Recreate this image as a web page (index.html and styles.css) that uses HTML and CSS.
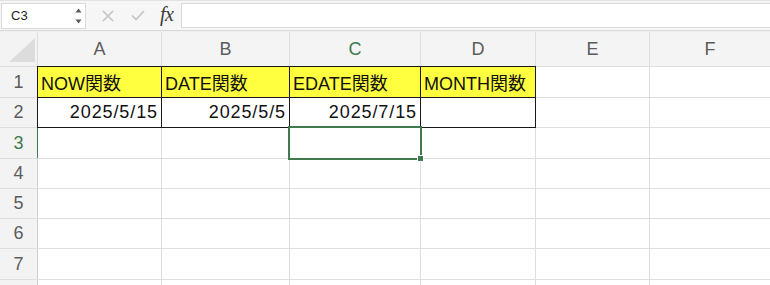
FILE: index.html
```html
<!DOCTYPE html>
<html lang="ja">
<head>
<meta charset="utf-8">
<title>Sheet</title>
<link rel="stylesheet" href="styles.css">
</head>
<body>
<div class="app">
  <div class="toolbar">
    <div class="namebox">
      <span class="ref">C3</span>
      <span class="spin">
        <svg width="7" height="17" viewBox="0 0 7 17"><polygon points="3.5,0.5 6.5,4.5 0.5,4.5" fill="#5a5a5a"/><polygon points="0.5,11.5 6.5,11.5 3.5,15.5" fill="#5a5a5a"/></svg>
      </span>
    </div>
    <span class="tb-icon cancel">
      <svg width="12" height="12" viewBox="0 0 12 12"><path d="M1 1 L11 11 M11 1 L1 11" stroke="#c4c4c4" stroke-width="1.6" fill="none"/></svg>
    </span>
    <span class="tb-icon ok">
      <svg width="14" height="11" viewBox="0 0 14 11"><path d="M1 5.5 L5 9.5 L13 1" stroke="#c4c4c4" stroke-width="1.6" fill="none"/></svg>
    </span>
    <span class="fx">fx</span>
    <div class="formula"></div>
  </div>
  <div class="sheet">
    <div class="corner"><svg width="37" height="34" viewBox="0 0 37 34"><polygon points="35,6 35,30 9,30" fill="#dcdcdc"/></svg></div>
    <div class="ch">A</div>
    <div class="ch">B</div>
    <div class="ch sel">C</div>
    <div class="ch">D</div>
    <div class="ch">E</div>
    <div class="ch">F</div>

    <div class="rh">1</div>
    <div class="c bx yl">NOW関数</div>
    <div class="c bx yl">DATE関数</div>
    <div class="c bx yl">EDATE関数</div>
    <div class="c bx yl">MONTH関数</div>
    <div class="c"></div>
    <div class="c"></div>

    <div class="rh">2</div>
    <div class="c bx num">2025/5/15</div>
    <div class="c bx num">2025/5/5</div>
    <div class="c bx num">2025/7/15</div>
    <div class="c bx"></div>
    <div class="c"></div>
    <div class="c"></div>

    <div class="rh sel">3</div>
    <div class="c"></div>
    <div class="c"></div>
    <div class="c active"></div>
    <div class="c"></div>
    <div class="c"></div>
    <div class="c"></div>

    <div class="rh">4</div>
    <div class="c"></div><div class="c"></div><div class="c"></div><div class="c"></div><div class="c"></div><div class="c"></div>
    <div class="rh">5</div>
    <div class="c"></div><div class="c"></div><div class="c"></div><div class="c"></div><div class="c"></div><div class="c"></div>
    <div class="rh">6</div>
    <div class="c"></div><div class="c"></div><div class="c"></div><div class="c"></div><div class="c"></div><div class="c"></div>
    <div class="rh">7</div>
    <div class="c"></div><div class="c"></div><div class="c"></div><div class="c"></div><div class="c"></div><div class="c"></div>
    <div class="rh"></div>
    <div class="c"></div><div class="c"></div><div class="c"></div><div class="c"></div><div class="c"></div><div class="c"></div>
  </div>
</div>
</body>
</html>
```

FILE: styles.css
```css
html, body {
  margin: 0;
  padding: 0;
  background: #ffffff;
  overflow: hidden;
}
body {
  font-family: "Liberation Sans", "Noto Sans CJK JP", sans-serif;
  width: 770px;
  height: 285px;
}
.app {
  display: flex;
  flex-direction: column;
  height: 285px;
}
.toolbar {
  height: 29px;
  display: flex;
  align-items: center;
  background: #f6f6f6;
  border-top: 1px solid #e2e2e2;
  border-bottom: 1px solid #d9d9d9;
  box-shadow: 0 1px 0 #f0f0f0;
  margin-bottom: 1px;
  flex: none;
}
.namebox {
  margin-left: 1px;
  width: 83px;
  height: 24px;
  background: #ffffff;
  border: 1px solid #dadada;
  display: flex;
  align-items: center;
  justify-content: space-between;
  box-sizing: content-box;
}
.ref {
  font-size: 13px;
  color: #1e1e1e;
  padding-left: 9px;
}
.spin {
  display: flex;
  padding-right: 3px;
  padding-top: 1px;
}
.tb-icon {
  display: flex;
  align-items: center;
}
.cancel { margin-left: 16px; }
.ok { margin-left: 17px; }
.fx {
  font-family: "Liberation Serif", serif;
  font-style: italic;
  font-size: 20px;
  color: #3a3a3a;
  margin-left: 15px;
  letter-spacing: -0.5px;
  padding-bottom: 2px;
}
.formula {
  flex: 1;
  height: 23px;
  margin-left: 8px;
  background: #ffffff;
  border: 1px solid #dadada;
  border-right: none;
}
.sheet {
  flex: 1;
  display: grid;
  grid-template-columns: 37px 123px 127px 130px 114px 113px 1fr;
  grid-template-rows: 34px 30px 29px 30px 29px 29px 29px 30px 1fr;
  gap: 1px;
  background: #dedede;
  overflow: hidden;
}
.corner {
  background: #f3f3f3;
  display: flex;
}
.ch {
  background: #f4f4f4;
  color: #5c5c5c;
  font-size: 18px;
  display: flex;
  align-items: center;
  justify-content: center;
  padding-top: 1px;
}
.ch.sel {
  color: #3e7a4c;
  box-shadow: 0 1px 0 #3e7a4c;
}
.rh {
  background: #f3f3f3;
  color: #5c5c5c;
  font-size: 18px;
  display: flex;
  align-items: center;
  justify-content: center;
  box-shadow: 1px 0 0 #cfcfcf;
}
.rh.sel {
  color: #3e7a4c;
  box-shadow: 1px 0 0 #3e7a4c;
}
.c {
  background: #ffffff;
  font-size: 18px;
  color: #111111;
  display: flex;
  align-items: center;
  padding: 0 3px;
  white-space: nowrap;
  overflow: visible;
}
.bx {
  outline: 1px solid #1a1a1a;
}
.yl {
  background: #ffff40;
}
.num {
  justify-content: flex-end;
  letter-spacing: 0.9px;
  padding-right: 3px;
}
.active {
  position: relative;
  outline: 2px solid #3e7a4c;
  outline-offset: 0;
}
.active::after {
  content: "";
  position: absolute;
  right: -4px;
  bottom: -4px;
  width: 5px;
  height: 5px;
  background: #3e7a4c;
  border: 1px solid #ffffff;
}
```
